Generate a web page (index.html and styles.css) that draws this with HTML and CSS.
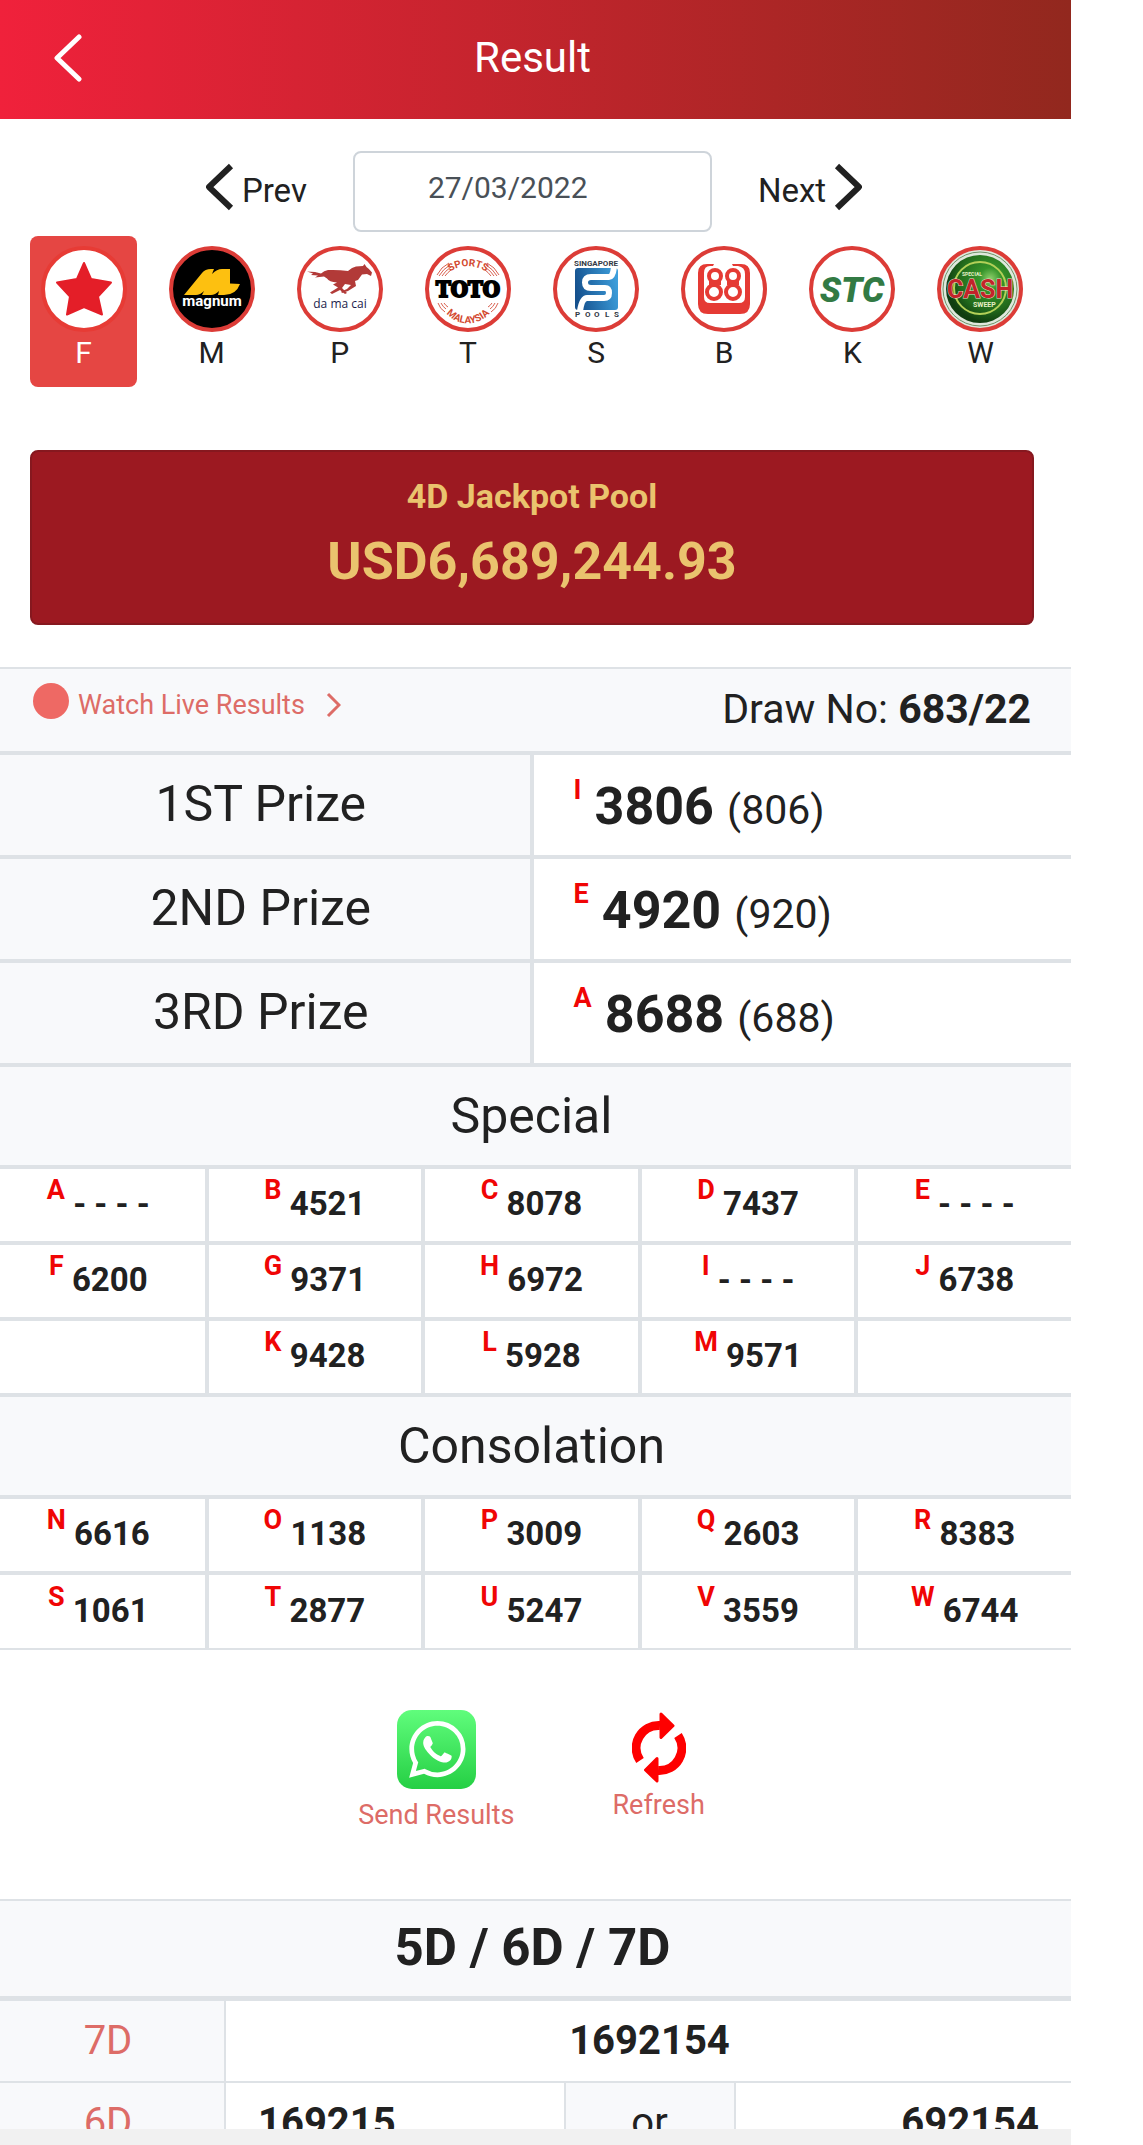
FILE: index.html
```
<!DOCTYPE html>
<html lang="en">
<head>
    <meta charset="UTF-8">
    <meta name="viewport" content="width=device-width, initial-scale=1.0">
    <title>Result</title>
    <link rel="stylesheet" href="styles.css">
</head>
<body>
    <div class="page">
        <div class="content">
            <header class="header">
                <button class="back" aria-label="Back">
                    <svg width="28" height="48" viewBox="0 0 28 48"><path d="M25 3L3 24l22 21" fill="none" stroke="#fff" stroke-width="5" stroke-linecap="round" stroke-linejoin="round"/></svg>
                </button>
                <h1>Result</h1>
            </header>

            <div class="container">
                <div class="date-nav">
                    <button>
                        <svg width="28" height="56" viewBox="0 0 28 56"><path d="M25 3L3 24l22 21" fill="none" stroke="#212121" stroke-width="6" stroke-linejoin="round"/></svg>
                        Prev
                    </button>
                    <input type="text" class="date" value="27/03/2022" aria-label="Draw date">
                    <button>
                        Next
                        <svg width="28" height="56" viewBox="0 0 28 56"><path d="M3 3l22 21L3 45" fill="none" stroke="#212121" stroke-width="6" stroke-linejoin="round"/></svg>
                    </button>
                </div>

                <nav class="providers">
                    <button class="provider active">
                        <svg viewBox="0 0 86 86">
                            <circle cx="43" cy="43" r="41" fill="#fff" stroke="#e73b35" stroke-width="4"/>
                            <path d="M43 17l7 16 20 3.500-13 14 4 18-18-7.500-17 7.500 3-18-13-14 20-3.500z" fill="#e41e28" stroke="#e41e28" stroke-width="2" stroke-linejoin="round"/>
                        </svg>
                        F
                    </button>
                    <button class="provider">
                        <svg viewBox="0 0 86 86">
                            <circle cx="43" cy="43" r="41" fill="#000" stroke="#dc3c37" stroke-width="4"/>
                            <path d="M15 49L33 27Q36 23 42 23h3l-2 5q5-5 10-5h8v14.500l10 .5q-4 11-16 11h-6l1-4q-4 4-8 4h-9l2-4q-4 4-8 4z" fill="#fdc010"/>
                            <text x="43" y="60" class="logo-magnum">magnum</text>
                        </svg>
                        M
                    </button>
                    <button class="provider">
                        <svg viewBox="0 0 86 86">
                            <circle cx="43" cy="43" r="41" fill="#fff" stroke="#dc3c37" stroke-width="4"/>
                            <path d="M10 25.500l8 .5 6 1.500q3-3 7-3.500 10-.5 20 1 4-4 8-4.500l7-.5 1.500-2 2 3q3 2 5.500 5.500l-1 3.500-4-2-5 .5-4 5.500-3 1 1 5-8 5-6 2-1-1.500 6-2.500 4-4-6-1-3 4 5 5-2 1-5-4-8 4-2-1.500 8-5-5-3 4-2q-8-.5-10-4l-3-2-9 1 3-2-7-.5 2-1.500z" fill="#b23a38"/>
                            <text x="43" y="62" class="logo-damacai">da ma cai</text>
                        </svg>
                        P
                    </button>
                    <button class="provider">
                        <svg viewBox="0 0 86 86">
                            <defs>
                                <path id="arc-top" d="M22 28A32 32 0 0 1 64 28"/>
                                <path id="arc-bottom" d="M18 62A28 28 0 0 0 68 62"/>
                            </defs>
                            <circle cx="43" cy="43" r="41" fill="#fff" stroke="#dc3c37" stroke-width="4"/>
                            <g fill="none" stroke="#d8604f" stroke-width="1">
                                <path d="M12 29q4-8 12-12M14 30q4-7 11-11M17 30q3-5 9-9M20 30q3-4 6-6"/>
                                <path d="M74 29q-4-8-12-12M72 30q-4-7-11-11M69 30q-3-5-9-9M66 30q-3-4-6-6"/>
                                <path d="M13 57q2 6 7 9M16 57q2 4 5 6M19 57q2 3 4 4"/>
                                <path d="M73 57q-2 6-7 9M70 57q-2 4-5 6M67 57q-2 3-4 4"/>
                            </g>
                            <text class="logo-arc"><textPath href="#arc-top" startOffset="50%">SPORTS</textPath></text>
                            <text x="43" y="51" class="logo-toto">TOTO</text>
                            <text class="logo-arc"><textPath href="#arc-bottom" startOffset="50%">MALAYSIA</textPath></text>
                        </svg>
                        T
                    </button>
                    <button class="provider">
                        <svg viewBox="0 0 86 86">
                            <defs>
                                <linearGradient id="pools" x1="0" y1="0.500" x2="1" y2="0.300">
                                    <stop offset="0" stop-color="#15508d"/>
                                    <stop offset="1" stop-color="#3ea0dd"/>
                                </linearGradient>
                            </defs>
                            <circle cx="43" cy="43" r="41" fill="#fff" stroke="#dc3c37" stroke-width="4"/>
                            <text x="43" y="20" class="logo-pools">SINGAPORE</text>
                            <rect x="22" y="22" width="43" height="42" rx="3" fill="url(#pools)"/>
                            <path d="M61 21q-1 10-5 10H38q-6 0-6 5.500T38 42h14q4 0 4 5t-5 5H34q-5 0-7 13" fill="none" stroke="#fff" stroke-width="6"/>
                            <text x="22 32 41 52 61" y="71" class="logo-pools start">POOLS</text>
                        </svg>
                        S
                    </button>
                    <button class="provider">
                        <svg viewBox="0 0 86 86">
                            <circle cx="43" cy="43" r="41" fill="#fff" stroke="#dc3c37" stroke-width="4"/>
                            <path d="M33 18h-7q-9 0-9 9v31q0 10 10 10h32q10 0 10-10V27q0-9-9-9h-9l1 2h5q7 1 7 8v23q0 6-6 6H29q-6 0-6-6V27q0-7 6-7h3z" fill="#e53a34"/>
                            <g fill="#fff" stroke="#e53a34" stroke-width="4">
                                <circle cx="34" cy="30" r="6"/><circle cx="52" cy="30" r="6"/>
                                <circle cx="33" cy="46" r="7"/><circle cx="52" cy="46" r="7"/>
                            </g>
                            <path d="M28 37h12M46 37h12" stroke="#e53a34" stroke-width="4"/>
                        </svg>
                        B
                    </button>
                    <button class="provider">
                        <svg viewBox="0 0 86 86">
                            <circle cx="43" cy="43" r="41" fill="#fff" stroke="#dc3c37" stroke-width="4"/>
                            <text x="43" y="56" class="logo-stc">STC</text>
                        </svg>
                        K
                    </button>
                    <button class="provider">
                        <svg viewBox="0 0 86 86">
                            <defs>
                                <radialGradient id="ball" cx="0.650" cy="0.350" r="0.650">
                                    <stop offset="0" stop-color="#8fd06c"/>
                                    <stop offset="0.250" stop-color="#36942a"/>
                                    <stop offset="0.700" stop-color="#226b1c"/>
                                    <stop offset="1" stop-color="#0f3d10"/>
                                </radialGradient>
                            </defs>
                            <circle cx="43" cy="43" r="41" fill="#dfe8dc" stroke="#dc3c37" stroke-width="4"/>
                            <circle cx="43" cy="43" r="37" fill="none" stroke="#6f9468" stroke-width="1"/>
                            <circle cx="43" cy="43" r="34" fill="url(#ball)"/>
                            <circle cx="43" cy="42" r="26" fill="none" stroke="#b3d058" stroke-width="2"/>
                            <text x="25" y="30" class="logo-small">SPECIAL</text>
                            <text x="43" y="52" class="logo-cash">CASH</text>
                            <text x="36" y="61" class="logo-small sweep">SWEEP</text>
                        </svg>
                        W
                    </button>
                </nav>

                <section class="jackpot">
                    <h2>4D Jackpot Pool</h2>
                    <p>USD6,689,244.93</p>
                </section>
            </div>

            <div class="draw-bar">
                <a href="#" class="live">
                    <span class="dot"></span>
                    Watch Live Results
                    <svg width="15" height="26" viewBox="0 0 15 26"><path d="M2 2l11 11L2 24" fill="none" stroke="#dd6c67" stroke-width="3"/></svg>
                </a>
                <div class="draw-no">Draw No: <b>683/22</b></div>
            </div>

            <table class="results prizes">
                <tr><th>1ST Prize</th><td><sup>I</sup> <b>3806</b> (806)</td></tr>
                <tr><th>2ND Prize</th><td><sup>E</sup> <b>4920</b> (920)</td></tr>
                <tr><th>3RD Prize</th><td><sup>A</sup> <b>8688</b> (688)</td></tr>
            </table>

            <table class="results numbers">
                <tr><th colspan="5">Special</th></tr>
                <tr>
                    <td><sup>A</sup> - - - -</td>
                    <td><sup>B</sup> 4521</td>
                    <td><sup>C</sup> 8078</td>
                    <td><sup>D</sup> 7437</td>
                    <td><sup>E</sup> - - - -</td>
                </tr>
                <tr>
                    <td><sup>F</sup> 6200</td>
                    <td><sup>G</sup> 9371</td>
                    <td><sup>H</sup> 6972</td>
                    <td><sup>I</sup> - - - -</td>
                    <td><sup>J</sup> 6738</td>
                </tr>
                <tr>
                    <td></td>
                    <td><sup>K</sup> 9428</td>
                    <td><sup>L</sup> 5928</td>
                    <td><sup>M</sup> 9571</td>
                    <td></td>
                </tr>
            </table>

            <table class="results numbers last">
                <tr><th colspan="5">Consolation</th></tr>
                <tr>
                    <td><sup>N</sup> 6616</td>
                    <td><sup>O</sup> 1138</td>
                    <td><sup>P</sup> 3009</td>
                    <td><sup>Q</sup> 2603</td>
                    <td><sup>R</sup> 8383</td>
                </tr>
                <tr>
                    <td><sup>S</sup> 1061</td>
                    <td><sup>T</sup> 2877</td>
                    <td><sup>U</sup> 5247</td>
                    <td><sup>V</sup> 3559</td>
                    <td><sup>W</sup> 6744</td>
                </tr>
            </table>

            <div class="actions">
                <button class="action">
                    <svg width="79" height="79" viewBox="0 0 79 79">
                        <defs>
                            <linearGradient id="wa" x1="0" y1="0" x2="0" y2="1">
                                <stop offset="0" stop-color="#60fd7c"/>
                                <stop offset="1" stop-color="#25cf44"/>
                            </linearGradient>
                        </defs>
                        <rect width="79" height="79" rx="15" fill="url(#wa)"/>
                        <path transform="translate(12 11) scale(2.360)" fill="#fff" d="M17.472 14.382c-.297-.149-1.758-.867-2.030-.967-.273-.099-.471-.148-.67.15-.197.297-.767.966-.94 1.164-.173.199-.347.223-.644.075-.297-.15-1.255-.463-2.390-1.475-.883-.788-1.480-1.761-1.653-2.059-.173-.297-.018-.458.13-.606.134-.133.298-.347.446-.52.149-.174.198-.298.298-.497.099-.198.05-.371-.025-.52-.075-.149-.669-1.612-.916-2.207-.242-.579-.487-.5-.669-.51-.173-.008-.371-.01-.57-.01-.198 0-.52.074-.792.372-.272.297-1.040 1.016-1.040 2.479 0 1.462 1.065 2.875 1.213 3.074.149.198 2.096 3.200 5.077 4.487.709.306 1.262.489 1.694.625.712.227 1.360.195 1.871.118.571-.085 1.758-.719 2.006-1.413.248-.694.248-1.289.173-1.413-.074-.124-.272-.198-.57-.347m-5.421 7.403h-.004a9.870 9.870 0 01-5.031-1.378l-.361-.214-3.741.982.998-3.648-.235-.374a9.860 9.860 0 01-1.510-5.260c.001-5.450 4.436-9.884 9.888-9.884 2.640 0 5.122 1.030 6.988 2.898a9.825 9.825 0 012.893 6.994c-.003 5.450-4.437 9.884-9.885 9.884m8.413-18.297A11.815 11.815 0 0012.050 0C5.495 0 .16 5.335.157 11.892c0 2.096.547 4.142 1.588 5.945L.057 24l6.305-1.654a11.882 11.882 0 005.683 1.448h.005c6.554 0 11.890-5.335 11.893-11.893a11.821 11.821 0 00-3.480-8.413Z"/>
                    </svg>
                    Send Results
                </button>
                <button class="action refresh">
                    <svg width="54" height="71" viewBox="0 0 54 71">
                        <path d="M8 48.500A22.500 22.500 0 0 1 28 13.500M46 23.500A22.500 22.500 0 0 1 26 58.500" fill="none" stroke="#fe0000" stroke-width="9"/>
                        <path d="M29 2l12 11.700L29 25.500zM25 46.500L13.500 58 25 69z" fill="#fe0000" stroke="#fe0000" stroke-width="3" stroke-linejoin="round"/>
                    </svg>
                    Refresh
                </button>
            </div>

            <table class="results extra">
                <colgroup>
                    <col class="col-label"><col><col class="col-or"><col>
                </colgroup>
                <tr><th colspan="4" class="heading">5D / 6D / 7D</th></tr>
                <tr><th>7D</th><td colspan="3">1692154</td></tr>
                <tr><th>6D</th><td class="left">169215</td><td class="or">or</td><td class="right">692154</td></tr>
            </table>
        </div>
        <div class="bottom-bar"></div>
    </div>
</body>
</html>
```

FILE: styles.css
```
* {
    margin: 0;
    padding: 0;
    box-sizing: border-box;
}

body {
    background: #fff;
    color: #212121;
    font-family: Roboto, "Liberation Sans", sans-serif;
}

button {
    border: none;
    background: none;
    color: inherit;
    font-family: inherit;
    cursor: pointer;
}

svg {
    display: block;
    flex-shrink: 0;
}

.page {
    display: flex;
    flex-direction: column;
    height: 100vh;
    margin-right: 72px;
}

.content {
    flex: 1;
    min-height: 0;
    overflow-x: hidden;
    overflow-y: auto;
    scrollbar-width: none;
}

.bottom-bar {
    height: 16px;
    background: #f1f1f1;
}

/* header */
.header {
    display: flex;
    align-items: center;
    height: 119px;
    padding: 0 88px 4px 54px;
    background: linear-gradient(to right, #f0213b, #92281e);
    color: #fff;
}

.header h1 {
    flex: 1;
    text-align: center;
    font-size: 42px;
    font-weight: 400;
}

.container {
    padding: 32px 37px 42px 30px;
}

.date-nav {
    display: flex;
    justify-content: center;
    gap: 46px;
    margin-bottom: 4px;
    padding-left: 4px;
}

.date-nav button {
    display: flex;
    align-items: center;
    gap: 8px;
    padding-bottom: 2px;
    font-size: 33px;
}

.date {
    width: 359px;
    height: 81px;
    padding: 0 20px 8px 73px;
    border: 2px solid #ced4da;
    border-radius: 8px;
    color: #495057;
    font-family: inherit;
    font-size: 30px;
}

/* providers */
.providers {
    display: grid;
    grid-template-columns: repeat(8, 1fr);
    gap: 21px;
    margin-bottom: 63px;
}

.provider {
    display: flex;
    flex-direction: column;
    align-items: center;
    gap: 3px;
    padding: 10px 0 17px;
    border-radius: 8px;
    font-size: 30px;
    line-height: 35px;
}

.provider svg {
    width: 86px;
    height: 86px;
}

.provider.active {
    background: #e54643;
    color: #fff;
}

.provider text {
    text-anchor: middle;
    font-weight: 700;
}

.provider .logo-magnum {
    fill: #fff;
    font-size: 15px;
}

.provider .logo-damacai {
    fill: #1b1d4d;
    font-family: "Open Sans", sans-serif;
    font-size: 12px;
    font-weight: 400;
}

.provider .logo-arc {
    fill: #d3492f;
    font-size: 10px;
}

.provider .logo-toto {
    fill: #000;
    stroke: #000;
    stroke-width: 2px;
    font-family: "DejaVu Serif Condensed", "DejaVu Serif", serif;
    font-size: 22px;
}

.provider .logo-pools {
    fill: #333a45;
    font-size: 8px;
}

.provider .logo-stc {
    fill: #327a44;
    font-size: 35px;
    font-style: italic;
    font-weight: 900;
}

.provider .logo-small {
    fill: #e6efc5;
    font-size: 5px;
}

.provider .logo-cash {
    fill: #c3232a;
    stroke: #e6dcc8;
    stroke-width: 1px;
    paint-order: stroke;
    font-size: 25px;
}

.provider .sweep {
    font-size: 7px;
}

.provider .start,
.provider .logo-small {
    text-anchor: start;
}

/* jackpot */
.jackpot {
    padding: 24px 0 31px;
    border: 2px solid #86181f;
    border-radius: 8px;
    background: #9c1921;
    color: #eac36e;
    text-align: center;
    font-weight: 700;
}

.jackpot h2 {
    margin-bottom: 16px;
    font-size: 34px;
    line-height: 40px;
}

.jackpot p {
    font-size: 52px;
    line-height: 60px;
}

/* draw bar */
.draw-bar {
    display: flex;
    justify-content: space-between;
    align-items: center;
    height: 88px;
    padding: 0 40px 2px 33px;
    border-top: 2px solid #dee2e6;
    border-bottom: 4px solid #dee2e6;
    background: #f8f9fb;
}

.live {
    display: flex;
    align-items: center;
    gap: 9px;
    padding-bottom: 8px;
    color: #dd6c67;
    font-size: 27px;
    text-decoration: none;
}

.live svg {
    margin-left: 12px;
}

.dot {
    width: 36px;
    height: 36px;
    margin-bottom: 8px;
    border-radius: 50%;
    background: #ee6964;
}

.draw-no {
    font-size: 41px;
}

/* result tables bleed past both page edges */
.results {
    width: calc(100% + 12px);
    margin-left: -8px;
    table-layout: fixed;
    border-spacing: 0;
}

.results th {
    background: #f8f9fb;
    font-weight: 400;
}

.results th,
.results td {
    border-right: 4px solid #dee2e6;
    border-bottom: 4px solid #dee2e6;
    text-align: center;
}

.results sup {
    color: #f00505;
    font-size: 27px;
    font-weight: 700;
    line-height: 1;
}

.prizes th {
    height: 104px;
    padding-bottom: 3px;
    font-size: 50px;
}

.prizes td {
    padding: 6px 0 0 40px;
    text-align: left;
    font-size: 41px;
    line-height: 60px;
}

.prizes sup {
    margin-right: 3px;
    vertical-align: 25px;
}

.prizes b {
    margin-right: 3px;
    font-size: 52px;
    line-height: 1;
}

.numbers th {
    height: 102px;
    font-size: 50px;
}

.numbers td {
    height: 76px;
    padding-bottom: 9px;
    font-size: 33px;
    font-weight: 700;
    line-height: 40px;
}

.numbers sup {
    vertical-align: 16px;
}

.last tr:last-child td {
    height: 75px;
    border-bottom-width: 2px;
}

/* actions */
.actions {
    display: flex;
    justify-content: center;
    align-items: flex-start;
    gap: 98px;
    padding: 60px 8px 68px 0;
}

.action {
    display: flex;
    flex-direction: column;
    align-items: center;
    gap: 10px;
    color: #dd6c67;
    font-size: 27px;
    line-height: 32px;
}

.refresh {
    gap: 6px;
    padding-top: 2px;
}

/* 5D / 6D / 7D */
.col-label {
    width: 234px;
}

.col-or {
    width: 170px;
}

.extra th,
.extra td {
    height: 82px;
    padding-bottom: 2px;
    border-right-width: 2px;
    border-bottom-width: 2px;
    font-size: 40px;
}

.extra th {
    color: #dd6c67;
}

.extra td {
    font-weight: 700;
}

.extra .heading {
    height: 102px;
    border-top: 2px solid #dee2e6;
    border-bottom-width: 5px;
    color: #212121;
    font-size: 51px;
    font-weight: 700;
}

.extra .left {
    padding-left: 32px;
    text-align: left;
}

.extra .right {
    padding-right: 34px;
    text-align: right;
}

.extra .or {
    background: #f8f9fb;
    font-weight: 400;
}
```
